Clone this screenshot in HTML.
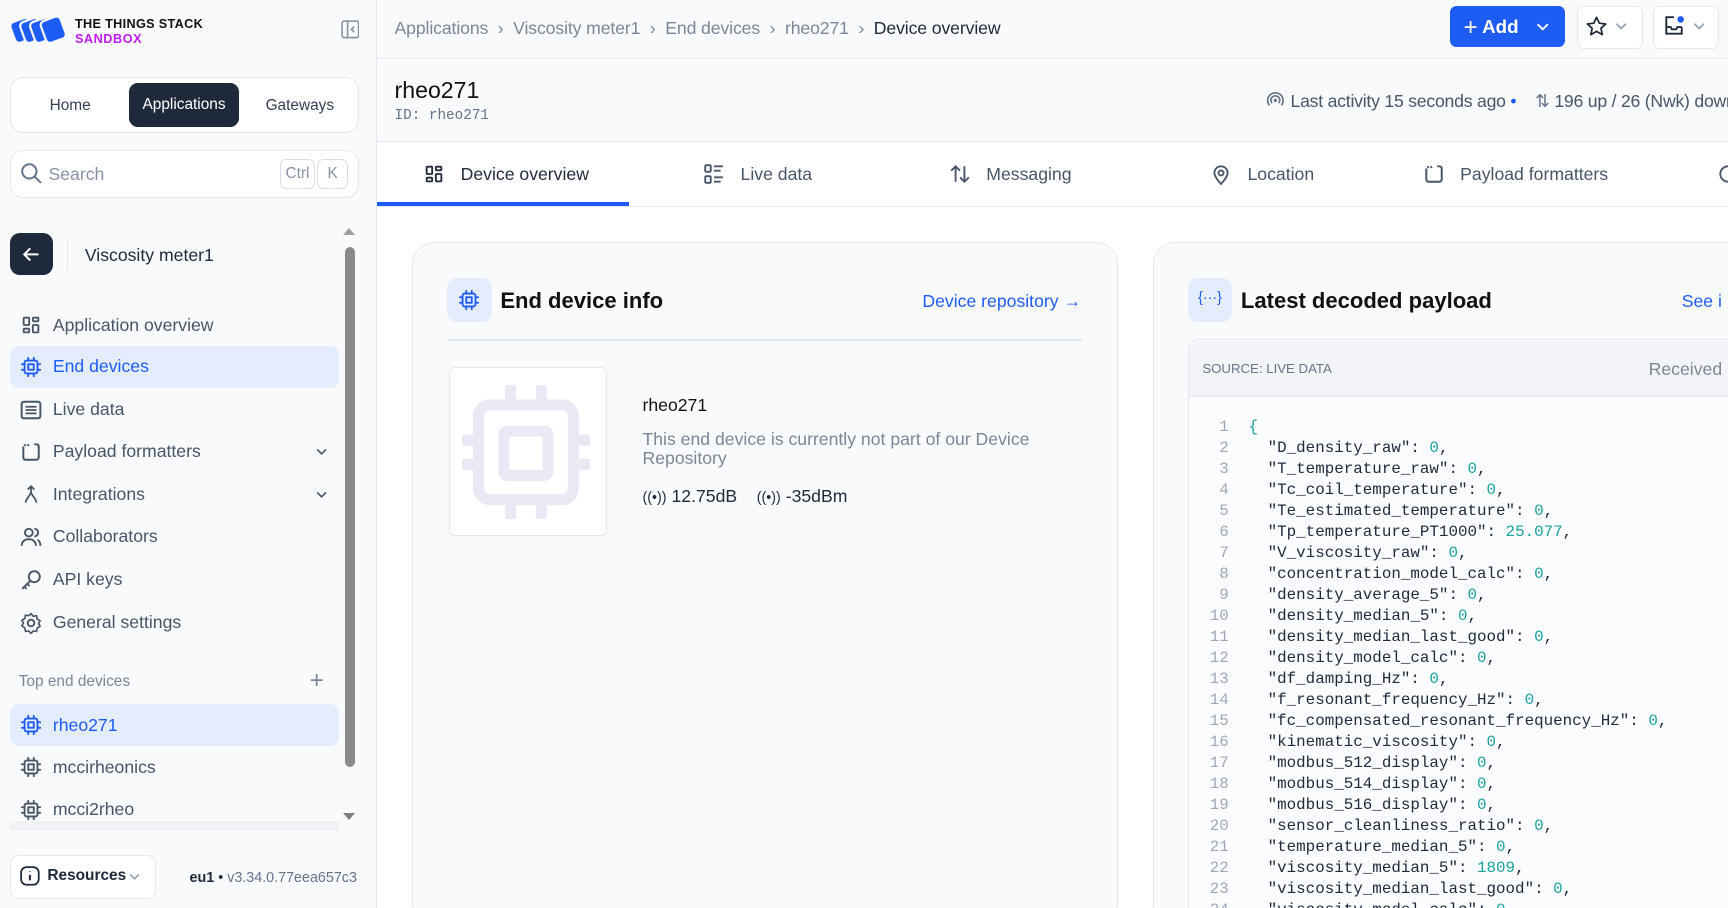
<!DOCTYPE html>
<html><head><meta charset="utf-8"><style>
html,body{margin:0;padding:0;overflow:hidden;background:#fff}
#w{zoom:1.10204;width:1568px;height:824px;position:relative;overflow:hidden;font-family:"Liberation Sans",sans-serif;color:#1e293b}
.a{position:absolute}
.side{left:0;top:0;width:341px;height:824px;background:#f8fafc;border-right:1px solid #e2e8f0;overflow:hidden}
.nav{left:9px;width:299px;height:38px;border-radius:8px;display:flex;align-items:center;font-size:16px;color:#475569}
.nav svg{margin-left:9px;margin-right:10px}
.nav.on{background:#e3edfd;color:#1e5cf6}
.code{font-family:"Liberation Mono",monospace;font-size:14.4px;line-height:19.05px;white-space:pre;color:#1e293b}
.ln{color:#a0a8b8;text-align:right;width:30px;display:inline-block;margin-right:18px}
.n{color:#19a0a0}
.tab{top:130px;height:56px;display:flex;align-items:center;font-size:16px;color:#475569}
.tab svg{margin-right:14px}
.chev{position:absolute}
</style></head><body><div id="w">
<svg width="0" height="0" style="position:absolute"><defs>
<symbol id="chip" viewBox="0 0 24 24"><g fill="none" stroke="currentColor" stroke-width="2" stroke-linecap="round"><rect x="5" y="5" width="14" height="14" rx="2"/><rect x="9" y="9" width="6" height="6"/><path d="M9 2v3M15 2v3M9 19v3M15 19v3M2 9h3M2 15h3M19 9h3M19 15h3"/></g></symbol>
<symbol id="grid" viewBox="0 0 24 24"><g fill="none" stroke="currentColor" stroke-width="2"><rect x="4" y="4" width="6" height="8" rx="1"/><rect x="14" y="4" width="6" height="4" rx="1"/><rect x="4" y="16" width="6" height="4" rx="1"/><rect x="14" y="12" width="6" height="8" rx="1"/></g></symbol>
<symbol id="chv" viewBox="0 0 12 12"><path d="M2 4l4 4 4-4" fill="none" stroke="currentColor" stroke-width="1.5"/></symbol>
</defs></svg>

<div class="a side">
  <svg class="a" style="left:9px;top:14px" width="52" height="28" viewBox="0 0 52 28"><g fill="#1e5cf6" stroke="#f8fafc" stroke-width="2"><rect x="2" y="4" width="18" height="20" rx="4" transform="rotate(-20 11 14)"/><rect x="11" y="4" width="18" height="20" rx="4" transform="rotate(-20 20 14)"/><rect x="20" y="4" width="18" height="20" rx="4" transform="rotate(-20 29 14)"/><rect x="30" y="3" width="19" height="21" rx="4" transform="rotate(-20 39 14)"/></g></svg>
  <div class="a" style="left:68px;top:15px;font-weight:bold;font-size:11.5px;letter-spacing:.3px;color:#111">THE THINGS STACK</div>
  <div class="a" style="left:68px;top:29px;font-weight:bold;font-size:11.5px;letter-spacing:.5px;color:#c21bf0">SANDBOX</div>
  <svg class="a" style="left:309px;top:18px" width="17" height="17" viewBox="0 0 17 17"><rect x="1" y="1" width="15" height="15" rx="2" fill="none" stroke="#8a95a5" stroke-width="1.5"/><path d="M6 1v15M12 6l-2.5 2.5L12 11" fill="none" stroke="#8a95a5" stroke-width="1.5"/></svg>
  <div class="a" style="left:9px;top:70px;width:315px;height:49px;border:1px solid #e2e8f0;border-radius:12px;background:#fff"></div>
  <div class="a" style="left:45px;top:88px;font-size:14px;color:#334155">Home</div>
  <div class="a" style="left:117px;top:75px;width:100px;height:40px;border-radius:8px;background:#1e293b;color:#fff;font-size:14px;line-height:40px;text-align:center">Applications</div>
  <div class="a" style="left:241px;top:88px;font-size:14px;color:#334155">Gateways</div>
  <div class="a" style="left:9px;top:136px;width:315px;height:42px;border:1px solid #e2e8f0;border-radius:12px;background:#fff"></div>
  <svg class="a" style="left:18px;top:147px" width="21" height="21" viewBox="0 0 21 21"><circle cx="8.5" cy="8.5" r="6.5" fill="none" stroke="#64748b" stroke-width="1.8"/><path d="M13.5 13.5L19 19" stroke="#64748b" stroke-width="1.8"/></svg>
  <div class="a" style="left:44px;top:149px;font-size:16px;color:#8793a5">Search</div>
  <div class="a" style="left:254px;top:144px;width:30px;height:26px;border:1px solid #d8dee8;border-radius:6px;font-size:14px;color:#8793a5;text-align:center;line-height:26px">Ctrl</div>
  <div class="a" style="left:288px;top:144px;width:26px;height:26px;border:1px solid #d8dee8;border-radius:6px;font-size:14px;color:#8793a5;text-align:center;line-height:26px">K</div>
  <div class="a" style="left:9px;top:211px;width:39px;height:39px;border-radius:9px;background:#1e293b"></div>
  <svg class="a" style="left:20px;top:222px" width="17" height="17" viewBox="0 0 17 17"><path d="M15 8.5H2M7.5 3L2 8.5 7.5 14" fill="none" stroke="#fff" stroke-width="1.8"/></svg>
  <div class="a" style="left:61px;top:216px;width:1px;height:30px;background:#e2e8f0"></div>
  <div class="a" style="left:77px;top:222px;font-size:16px;color:#1e293b">Viscosity meter1</div>
  <div class="a" style="left:311px;top:207px;width:0;height:0;border-left:6px solid transparent;border-right:6px solid transparent;border-bottom:7px solid #a0a0a0"></div>
  <div class="a" style="left:313px;top:224px;width:9px;height:472px;border-radius:5px;background:#8a8a8a"></div>
  <div class="a" style="left:311px;top:738px;width:0;height:0;border-left:6px solid transparent;border-right:6px solid transparent;border-top:7px solid #808080"></div>

  <div class="a nav" style="top:276px"><svg width="20" height="20" style="color:#475569"><use href="#grid"/></svg>Application overview</div>
  <div class="a nav on" style="top:314px"><svg width="20" height="20" style="color:#1e5cf6"><use href="#chip"/></svg>End devices</div>
  <div class="a nav" style="top:353px"><svg width="20" height="20" viewBox="0 0 20 20"><rect x="1.5" y="2.5" width="17" height="15" rx="2" fill="none" stroke="#475569" stroke-width="1.8"/><path d="M5 7h10M5 10h10M5 13h10" stroke="#475569" stroke-width="1.6"/></svg>Live data</div>
  <div class="a nav" style="top:391px"><svg width="20" height="20" viewBox="0 0 20 20"><path d="M3 5v10a2 2 0 002 2h10a2 2 0 002-2V5a2 2 0 00-2-2h-2M5 3l-1 1.5M7 3l1 1.5" fill="none" stroke="#475569" stroke-width="1.8"/></svg>Payload formatters<svg class="chev" style="right:0;top:13px;color:#475569" width="12" height="12"><use href="#chv"/></svg></div>
  <div class="a nav" style="top:430px"><svg width="20" height="20" viewBox="0 0 20 20"><path d="M10 2v5c0 3 4 5 5 10M10 7c0 3-4 5-5 10M7 5l3-3 3 3" fill="none" stroke="#475569" stroke-width="1.6"/></svg>Integrations<svg class="chev" style="right:0;top:13px;color:#475569" width="12" height="12"><use href="#chv"/></svg></div>
  <div class="a nav" style="top:468px"><svg width="20" height="20" viewBox="0 0 20 20"><circle cx="8" cy="6" r="3.5" fill="none" stroke="#475569" stroke-width="1.7"/><path d="M1.5 18c0-4 3-6 6.5-6s6.5 2 6.5 6M13 2.5a3.5 3.5 0 010 7M16 12.5c1.5 1 2.5 3 2.5 5.5" fill="none" stroke="#475569" stroke-width="1.7"/></svg>Collaborators</div>
  <div class="a nav" style="top:507px"><svg width="20" height="20" viewBox="0 0 20 20"><circle cx="13" cy="7" r="5" fill="none" stroke="#475569" stroke-width="1.7"/><path d="M9.5 10.5L2 18M4 16l2 2M6.5 13.5l2 2" fill="none" stroke="#475569" stroke-width="1.7"/></svg>API keys</div>
  <div class="a nav" style="top:546px"><svg width="20" height="20" viewBox="0 0 20 20"><circle cx="10" cy="10" r="3" fill="none" stroke="#475569" stroke-width="1.7"/><path d="M10 1.5l2 2.3 3-.4.6 3 2.6 1.6-1.3 2.5 1.3 2.5-2.6 1.6-.6 3-3-.4-2 2.3-2-2.3-3 .4-.6-3L1.8 12.5 3.1 10 1.8 7.5l2.6-1.6.6-3 3 .4z" fill="none" stroke="#475569" stroke-width="1.5"/></svg>General settings</div>

  <div class="a" style="left:17px;top:611px;font-size:14px;color:#7b8798">Top end devices</div>
  <div class="a" style="left:281px;top:605px;font-size:22px;color:#7b8798;font-weight:300">+</div>
  <div class="a nav on" style="top:639px"><svg width="20" height="20" style="color:#1e5cf6"><use href="#chip"/></svg>rheo271</div>
  <div class="a nav" style="top:677px"><svg width="20" height="20" style="color:#475569"><use href="#chip"/></svg>mccirheonics</div>
  <div class="a nav" style="top:716px"><svg width="20" height="20" style="color:#475569"><use href="#chip"/></svg>mcci2rheo</div>
  <div class="a" style="left:9px;top:745px;width:299px;height:8px;background:linear-gradient(#f3f4f7,#eceef2)"></div>
  <div class="a" style="left:9px;top:776px;width:131px;height:38px;border:1px solid #e2e8f0;border-radius:8px;background:#fff"></div>
  <svg class="a" style="left:18px;top:786px" width="18" height="18" viewBox="0 0 18 18"><rect x="1" y="1" width="16" height="16" rx="5" fill="none" stroke="#1e293b" stroke-width="1.6"/><path d="M9 8v5M9 5v.5" stroke="#1e293b" stroke-width="1.8"/></svg>
  <div class="a" style="left:43px;top:787px;font-size:14px;font-weight:bold;color:#1e293b">Resources</div>
  <svg class="a" style="left:116px;top:789px;color:#94a3b8" width="12" height="12"><use href="#chv"/></svg>
  <div class="a" style="left:172px;top:789px;font-size:13px;color:#1e293b"><b>eu1</b> • <span style="color:#64748b">v3.34.0.77eea657c3</span></div>
</div>

<!-- top bar -->
<div class="a" style="left:342px;top:0;width:1226px;height:53px;background:#f8fafc;border-bottom:1px solid #e2e8f0"></div>
<div class="a" style="left:358px;top:16px;font-size:16px;color:#7b8798;letter-spacing:-.1px">Applications&nbsp;&nbsp;›&nbsp;&nbsp;Viscosity meter1&nbsp;&nbsp;›&nbsp;&nbsp;End devices&nbsp;&nbsp;›&nbsp;&nbsp;rheo271&nbsp;&nbsp;›&nbsp;&nbsp;<span style="color:#1e293b">Device overview</span></div>
<div class="a" style="left:1316px;top:5px;width:104px;height:38px;border-radius:6px;background:#1e5cf6;color:#fff;font-size:17px;font-weight:bold;line-height:38px"><span style="margin-left:12px;font-weight:normal;font-size:22px;vertical-align:-2px">+</span> Add</div>
<svg class="a" style="left:1393px;top:17px;color:#fff" width="14" height="14" viewBox="0 0 12 12"><use href="#chv"/></svg>
<div class="a" style="left:1431px;top:5px;width:58px;height:38px;border:1px solid #e2e8f0;border-radius:6px;background:#fff"></div>
<svg class="a" style="left:1438px;top:14px" width="21" height="21" viewBox="0 0 24 24"><path d="M12 2.5l2.9 6 6.6.8-4.9 4.5 1.3 6.5L12 17l-5.9 3.3 1.3-6.5-4.9-4.5 6.6-.8z" fill="none" stroke="#1e293b" stroke-width="1.8" stroke-linejoin="round"/></svg>
<svg class="a" style="left:1465px;top:17px;color:#94a3b8" width="13" height="13" viewBox="0 0 12 12"><use href="#chv"/></svg>
<div class="a" style="left:1500px;top:5px;width:58px;height:38px;border:1px solid #e2e8f0;border-radius:6px;background:#fff"></div>
<svg class="a" style="left:1509px;top:14px" width="20" height="20" viewBox="0 0 20 20"><path d="M10 2H3v15h14v-6M3 11h4l1 2h4l1-2h4" fill="none" stroke="#1e293b" stroke-width="1.7"/><circle cx="16" cy="4" r="3" fill="#1e5cf6"/></svg>
<svg class="a" style="left:1535px;top:17px;color:#94a3b8" width="13" height="13" viewBox="0 0 12 12"><use href="#chv"/></svg>

<!-- header -->
<div class="a" style="left:342px;top:54px;width:1226px;height:74px;background:#f8fafc;border-bottom:1px solid #e2e8f0"></div>
<div class="a" style="left:358px;top:70px;font-size:21px;color:#111">rheo271</div>
<div class="a" style="left:358px;top:98px;font-size:13px;font-family:'Liberation Mono',monospace;color:#64748b">ID: rheo271</div>
<svg class="a" style="left:1149px;top:83px" width="17" height="17" viewBox="0 0 17 17"><path d="M3 13a7 7 0 1111 0M5.5 11a4 4 0 116 0" fill="none" stroke="#64748b" stroke-width="1.5"/><circle cx="8.5" cy="8.5" r="1.5" fill="#64748b"/></svg>
<div class="a" style="left:1171px;top:83px;font-size:16px;color:#475569;white-space:nowrap;letter-spacing:-.2px">Last activity 15 seconds ago <span style="color:#1e5cf6">•</span>&nbsp;&nbsp;&nbsp;&nbsp;<span style="color:#64748b">⇅</span> 196 up / 26 (Nwk) down</div>

<!-- tabs -->
<div class="a" style="left:342px;top:187px;width:1226px;height:1px;background:#e2e8f0"></div>
<div class="a" style="left:342px;top:183px;width:229px;height:4px;background:#1e5cf6"></div>
<div class="a tab" style="left:384px;color:#1e293b"><svg width="20" height="20" style="color:#1e293b"><use href="#grid"/></svg>Device overview</div>
<div class="a tab" style="left:638px"><svg width="20" height="20" viewBox="0 0 20 20"><g fill="none" stroke="#475569" stroke-width="1.7"><rect x="2" y="2" width="5" height="6" rx="1"/><rect x="2" y="12" width="5" height="6" rx="1"/><path d="M10 3h8M10 7h6M10 13h8M10 17h6"/></g></svg>Live data</div>
<div class="a tab" style="left:861px"><svg width="20" height="20" viewBox="0 0 20 20"><path d="M6 17V3M2 7l4-4 4 4M14 3v14M10 13l4 4 4-4" fill="none" stroke="#475569" stroke-width="1.7"/></svg>Messaging</div>
<div class="a tab" style="left:1098px"><svg width="20" height="20" viewBox="0 0 20 20"><path d="M10 19s-6-6-6-10a6 6 0 0112 0c0 4-6 10-6 10z" fill="none" stroke="#475569" stroke-width="1.7"/><circle cx="10" cy="9" r="2.3" fill="none" stroke="#475569" stroke-width="1.7"/></svg>Location</div>
<div class="a tab" style="left:1291px"><svg width="20" height="20" viewBox="0 0 20 20"><path d="M3 5v10a2 2 0 002 2h10a2 2 0 002-2V5a2 2 0 00-2-2h-2M5 3l-1 1.5M7 3l1 1.5" fill="none" stroke="#475569" stroke-width="1.8"/></svg>Payload formatters</div>
<svg class="a" style="left:1558px;top:148px" width="20" height="20" viewBox="0 0 20 20"><circle cx="10" cy="10" r="7" fill="none" stroke="#475569" stroke-width="1.7"/></svg>

<!-- card 1 -->
<div class="a" style="left:374px;top:220px;width:639px;height:620px;border:1px solid #e2e8f0;border-radius:20px;background:#f9fafc"></div>
<div class="a" style="left:406px;top:252px;width:40px;height:40px;border-radius:9px;background:#e3edfd"></div>
<svg class="a" style="left:416px;top:262px;color:#1e5cf6" width="20" height="20"><use href="#chip"/></svg>
<div class="a" style="left:454px;top:261px;font-size:20px;font-weight:bold;color:#111">End device info</div>
<div class="a" style="left:837px;top:264px;font-size:16px;color:#1e5cf6">Device repository →</div>
<div class="a" style="left:406px;top:308px;width:576px;height:1px;background:#e2e8f0"></div>
<div class="a" style="left:407px;top:333px;width:142px;height:152px;border:1.5px solid #e2e8f0;border-radius:5px;background:#fff"></div>
<svg class="a" style="left:419px;top:349px" width="116" height="122" viewBox="0 0 116 122"><g fill="none" stroke="#e8e9f4" stroke-width="10" stroke-linecap="round"><rect x="15" y="18" width="86" height="86" rx="10"/><rect x="38" y="42" width="40" height="40" rx="3"/><path d="M44 3v15M72 3v15M44 104v15M72 104v15M2 50h13M2 72h13M101 50h13M101 72h13"/></g></svg>
<div class="a" style="left:583px;top:358px;font-size:16px;color:#111">rheo271</div>
<div class="a" style="left:583px;top:390px;font-size:16px;line-height:17px;color:#7b8798;width:380px">This end device is currently not part of our Device Repository</div>
<div class="a" style="left:583px;top:441px;font-size:16px;color:#1e293b;white-space:nowrap"><span style="font-size:13px">((•))</span> 12.75dB&nbsp;&nbsp;&nbsp;&nbsp;<span style="font-size:13px">((•))</span> -35dBm</div>

<!-- card 2 -->
<div class="a" style="left:1046px;top:220px;width:600px;height:620px;border:1px solid #e2e8f0;border-radius:20px;background:#f9fafc"></div>
<div class="a" style="left:1078px;top:252px;width:40px;height:40px;border-radius:9px;background:#e3edfd;color:#1e5cf6;font-size:13px;text-align:center;line-height:38px">{···}</div>
<div class="a" style="left:1126px;top:261px;font-size:20px;font-weight:bold;color:#111">Latest decoded payload</div>
<div class="a" style="left:1526px;top:264px;font-size:16px;color:#1e5cf6">See i</div>
<div class="a" style="left:1078px;top:308px;width:520px;height:560px;border:1px solid #e2e8f0;border-radius:10px;background:#fbfcfe"></div>
<div class="a" style="left:1079px;top:309px;width:520px;height:50px;border-bottom:1px solid #e2e8f0;background:#f3f4f7;border-radius:10px 10px 0 0"></div>
<div class="a" style="left:1091px;top:328px;font-size:12px;color:#64748b">SOURCE: LIVE DATA</div>
<div class="a" style="left:1496px;top:326px;font-size:16px;color:#7b8798;white-space:nowrap">Received 1</div>
<div class="a code" style="left:1085px;top:378px"><span class="ln">1</span><span class="n">{</span>
<span class="ln">2</span>  "D_density_raw": <span class="n">0</span>,
<span class="ln">3</span>  "T_temperature_raw": <span class="n">0</span>,
<span class="ln">4</span>  "Tc_coil_temperature": <span class="n">0</span>,
<span class="ln">5</span>  "Te_estimated_temperature": <span class="n">0</span>,
<span class="ln">6</span>  "Tp_temperature_PT1000": <span class="n">25.077</span>,
<span class="ln">7</span>  "V_viscosity_raw": <span class="n">0</span>,
<span class="ln">8</span>  "concentration_model_calc": <span class="n">0</span>,
<span class="ln">9</span>  "density_average_5": <span class="n">0</span>,
<span class="ln">10</span>  "density_median_5": <span class="n">0</span>,
<span class="ln">11</span>  "density_median_last_good": <span class="n">0</span>,
<span class="ln">12</span>  "density_model_calc": <span class="n">0</span>,
<span class="ln">13</span>  "df_damping_Hz": <span class="n">0</span>,
<span class="ln">14</span>  "f_resonant_frequency_Hz": <span class="n">0</span>,
<span class="ln">15</span>  "fc_compensated_resonant_frequency_Hz": <span class="n">0</span>,
<span class="ln">16</span>  "kinematic_viscosity": <span class="n">0</span>,
<span class="ln">17</span>  "modbus_512_display": <span class="n">0</span>,
<span class="ln">18</span>  "modbus_514_display": <span class="n">0</span>,
<span class="ln">19</span>  "modbus_516_display": <span class="n">0</span>,
<span class="ln">20</span>  "sensor_cleanliness_ratio": <span class="n">0</span>,
<span class="ln">21</span>  "temperature_median_5": <span class="n">0</span>,
<span class="ln">22</span>  "viscosity_median_5": <span class="n">1809</span>,
<span class="ln">23</span>  "viscosity_median_last_good": <span class="n">0</span>,
<span class="ln">24</span>  "viscosity_model_calc": <span class="n">0</span>,</div>
</div></body></html>
